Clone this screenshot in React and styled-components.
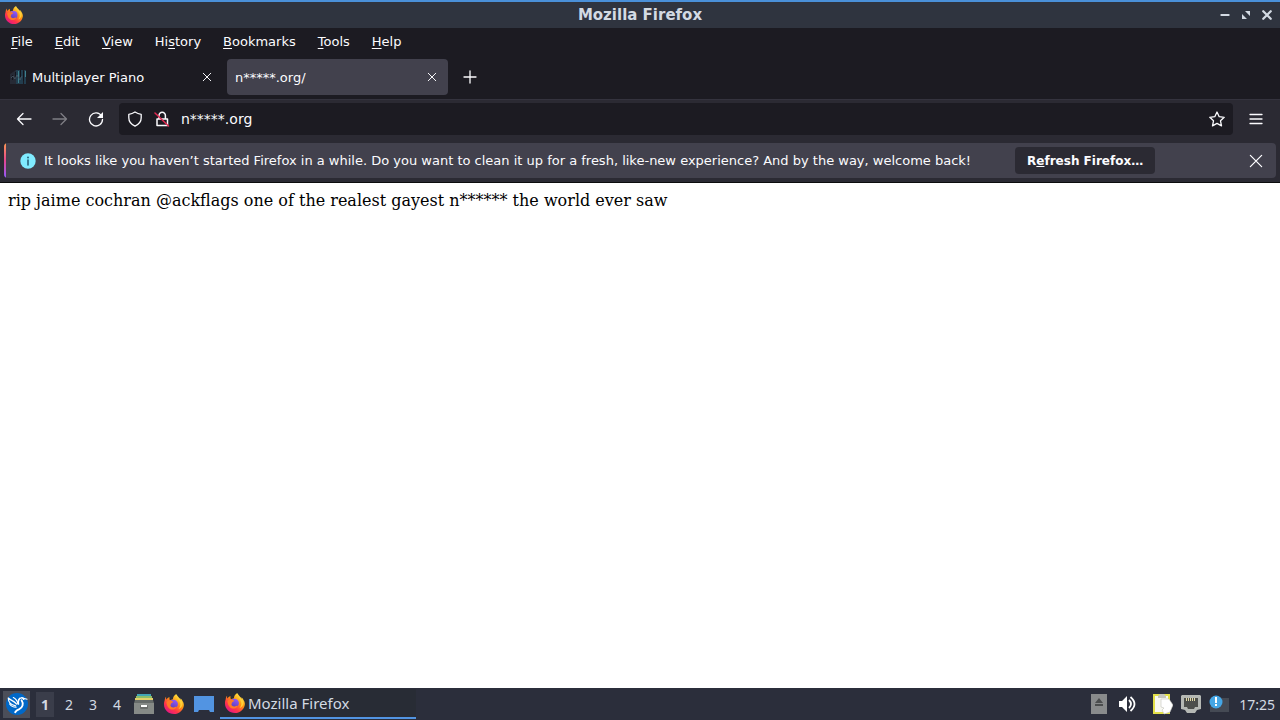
import React from 'react'
import styled, { createGlobalStyle } from 'styled-components'

const GlobalStyle = createGlobalStyle`
  * {
    box-sizing: border-box;
  }

  body {
    margin: 0;
    font-family: 'DejaVu Sans', sans-serif;
    font-size: 13px;
    color: #fbfbfe;
  }

  button,
  input {
    font: inherit;
    color: inherit;
    border: 0;
    padding: 0;
    background: none;
  }

  svg {
    display: block;
    flex: none;
  }
`

const Desktop = styled.div`
  display: flex;
  flex-direction: column;
  min-height: 100vh;
  background: #1c1b22;
`

const TitleBar = styled.header`
  display: grid;
  grid-template-columns: 1fr auto 1fr;
  align-items: center;
  height: 28px;
  padding: 0 5px;
  border-top: 2px solid #4a90d9;
  background: #2f343f;
`

const WindowTitle = styled.h1`
  margin: 0;
  font-size: 15px;
  line-height: 16px;
  color: #d3dae3;
`

const WindowButtons = styled.div`
  display: flex;
  justify-content: flex-end;
  gap: 5px;
`

const IconButton = styled.button`
  display: flex;
  align-items: center;
  justify-content: center;
  flex: none;
  width: ${({ $size }) => $size || 16}px;
  height: ${({ $size }) => $size || 16}px;
  opacity: ${({ disabled }) => (disabled ? 0.4 : 1)};
`

const MenuBar = styled.nav`
  display: flex;
  height: 27px;
`

const MenuItem = styled.button`
  padding: 0 11px;

  u {
    text-underline-offset: 2px;
  }
`

const TabStrip = styled.div`
  display: flex;
  align-items: center;
  gap: 4px;
  height: 44px;
  padding-left: 2px;
`

const Tab = styled.div`
  display: flex;
  align-items: center;
  gap: 6px;
  width: 221px;
  height: 36px;
  padding: 0 8px;
  border-radius: 4px;
  background: ${({ $active }) => ($active ? '#42414d' : 'transparent')};
`

const TabLabel = styled.button`
  flex: 1;
  text-align: left;
  white-space: nowrap;
  overflow: hidden;
`

const NavBar = styled.div`
  display: flex;
  align-items: center;
  gap: 4px;
  height: 41px;
  padding: 0 8px 2px;
  border-top: 1px solid #34333e;
  background: #2b2a33;
`

const AddressBar = styled.label`
  display: flex;
  align-items: center;
  gap: 11px;
  flex: 1;
  height: 32px;
  margin: 0 3px;
  padding: 0 8px;
  border-radius: 4px;
  background: #1c1b22;
`

const AddressInput = styled.input`
  flex: 1;
  min-width: 0;
  font-size: 14px;
  outline: none;
`

const NoticeArea = styled.div`
  padding: 3px 4px 4px;
  border-bottom: 1px solid #0c0c0d;
  background: #2b2a33;
`

const Notice = styled.div`
  display: flex;
  align-items: center;
  height: 35px;
  padding-right: 12px;
  border-radius: 4px;
  overflow: hidden;
  background: #42414d;

  &::before {
    content: '';
    width: 2px;
    height: 100%;
    margin-right: 14px;
    background: linear-gradient(#ff9a50, #e5468f 50%, #9059ff);
  }
`

const NoticeText = styled.p`
  margin: 0 44px 0 8px;
  white-space: nowrap;
`

const RefreshButton = styled.button`
  height: 27px;
  margin-right: auto;
  padding: 0 12px;
  border-radius: 4px;
  font-size: 12px;
  font-weight: bold;
  white-space: nowrap;
  background: #2b2a33;
`

const Page = styled.main`
  flex: 1;
  padding: 8px;
  background: #fff;
  color: #000;
  font-family: 'DejaVu Serif', serif;
  font-size: 16px;
  line-height: 19px;
`

const Taskbar = styled.footer`
  display: flex;
  align-items: center;
  height: 32px;
  padding: 0 5px 0 3px;
  background: #2b2e3b;
  color: #d3dae3;
  font-family: 'Noto Sans', sans-serif;
  font-size: 14px;
`

const StartButton = styled.button`
  display: flex;
  align-items: center;
  justify-content: center;
  width: 27px;
  height: 27px;
  background: #4b4e59;
`

const Workspaces = styled.div`
  display: flex;
  gap: 6px;
  margin: 0 6px;
`

const Workspace = styled.button`
  width: 18px;
  height: 25px;
  font-weight: ${({ $active }) => ($active ? 'bold' : 'normal')};
  background: ${({ $active }) => ($active ? '#3a3d4a' : 'transparent')};
`

const Launchers = styled.div`
  display: flex;
  gap: 6px;
`

const Task = styled.button`
  display: flex;
  align-items: center;
  gap: 3px;
  width: 196px;
  height: 30px;
  margin: 0 auto 0 4px;
  padding: 0 5px;
  border-bottom: 2px solid #5294e2;
  background: #282c35;
  font-size: 15px;
`

const Tray = styled.div`
  display: flex;
  align-items: center;
  gap: 8px;
`

const TrayGroup = styled.div`
  display: flex;
  gap: 4px;

  & + & {
    margin-left: 4px;
  }
`

const Clock = styled.time`
  white-space: nowrap;
`

const Line = ({ size = 16, d, width = 1.3, color = '#fbfbfe', children }) => (
  <svg width={size} height={size} viewBox="0 0 16 16" fill="none" stroke={color}
    strokeWidth={width} strokeLinecap="round" strokeLinejoin="round">
    <path d={d} />
    {children}
  </svg>
)

const FirefoxLogo = ({ size = 18, id }) => (
  <svg width={size} height={size} viewBox="0 0 24 24">
    <defs>
      <linearGradient id={`${id}-flame`} x1="0.85" y1="0.05" x2="0.2" y2="0.95">
        <stop offset="0" stopColor="#fff44f" />
        <stop offset="0.4" stopColor="#ff980e" />
        <stop offset="0.72" stopColor="#ff3647" />
        <stop offset="1" stopColor="#e31587" />
      </linearGradient>
      <linearGradient id={`${id}-globe`} x1="0.7" y1="0" x2="0.3" y2="1">
        <stop offset="0" stopColor="#9059ff" />
        <stop offset="1" stopColor="#6140b5" />
      </linearGradient>
    </defs>
    <path fill={`url(#${id}-flame)`} d="M22.2 8.4c-.6-1.500-1.800-2.800-2.800-3.300.6 1.100.9 2 1 2.800-1.400-3.200-3.800-4.500-5.400-7.300-.2-.3-.3-.5-.3-.6-3 1.700-4 4.600-4 6.200-1.500.1-2.700.7-3.600 1.300C6.500 6.300 6.400 4.800 6.600 3.600 5 4.300 3.700 5.500 2.900 6.600c-.5-.7-.4-2.800-.4-3.200C1.300 4.600.9 6.700.7 8.200 0 10 0 11.500 0 12.600 0 19 5.300 24 12 24c5.900 0 10.700-4.100 11.700-9.700.4-2.100-.2-4.100-1.500-5.900z" />
    <circle cx="11.500" cy="12" r="5.200" fill={`url(#${id}-globe)`} />
    <path fill="#ff7a26" d="M3 9.600c1.300-1.400 3.200-1.700 4.700-1.100 1.500-.4 2.600-.1 3.500.6-.1 1-1.800 1.500-2.700 2.200-.5.400-.2 1.800-.9 2.300.6 2.200 2.500 3 4.300 2.500 1.300-.4 2.100-1.100 3.300-.6-1 2-3 3.300-5.200 3.200C6 18.600 3.100 14.600 3 9.600z" />
    <path fill="#ffd039" d="M15 2c.4 3.700 4.700 5.600 4.700 10.600 0 2.300-.9 4.100-2.200 5.300 4-1.200 5.500-5.600 3.800-9.300C19.800 5.700 16.600 5 15 2z" />
  </svg>
)

const CloseIcon = ({ size, width = 1.3 }) => (
  <Line size={size} width={width} d="M3 3l10 10M13 3L3 13" />
)

const PianoIcon = () => (
  <svg width="16" height="16" viewBox="0 0 16 16">
    <path fill="#262a35" d="M0 5l6-4v14H0z" />
    <path fill="#223d4e" d="M6 1h7v14H6zM14 1h2v14h-2z" />
    <path fill="#14141c" d="M2 6h1v5H2zM5 3h1v7H5zM10 1h1v7h-1zM13 2h1v10h-1z" />
    <path stroke="#3d7f8c" d="M8.500 2v12M15.500 2v6" />
    <path stroke="#4a5a68" strokeWidth=".8" fill="none" d="M1 9l2-2 2 3 2-4 3 5 2-4" />
  </svg>
)

const ShieldIcon = () => (
  <Line d="M8 1c2 1.300 4 2 6.200 2.300v3.500c0 3.700-2.300 6.600-6.200 8.300-3.900-1.700-6.200-4.600-6.200-8.300V3.300C4 3 6 2.300 8 1z" />
)

const LockIcon = () => (
  <Line d="M3 8h10.500v6.500H3zM5 8V4.500a3.200 3.200 0 0 1 6.400 0V8" width={1.5}>
    <path stroke="#e22850" strokeWidth="1.500" d="M1 2l13.500 13" />
  </Line>
)

const InfoIcon = () => (
  <svg width="16" height="16" viewBox="0 0 16 16">
    <circle cx="8" cy="8" r="7.700" fill="#80ebff" />
    <circle cx="8" cy="4.500" r="1" fill="#27637a" />
    <path d="M8 7v5" stroke="#27637a" strokeWidth="1.600" strokeLinecap="round" />
  </svg>
)

const BirdIcon = () => (
  <svg width="22" height="22" viewBox="0 0 24 24">
    <circle cx="12" cy="12" r="12" fill="#0068c8" />
    <g fill="none" stroke="#fff" strokeLinecap="round" strokeLinejoin="round">
      <path strokeWidth="1.300" d="M2.500 5.500c2.500 2.500 6 3 9 6.500M2.500 5.500c0 4 2.500 7.500 8 8.500M8 5c3 1.500 4.500 4 5 7" />
      <path strokeWidth="1.300" d="M4 12c1.500 2.500 4 3.500 7 3.500" />
      <path strokeWidth="1.800" d="M13.500 12c-.6-4 .8-6.500 3.200-6.800 1.300-.2 2.300.6 2.600 1.500" />
      <path strokeWidth="1.200" d="M18 5.500l5 1.300" />
      <path strokeWidth="2" d="M17 8c2.600 4 1 8-2.500 9.500-2 .8-3.500 1.500-4.500 3.500" />
    </g>
  </svg>
)

const FilesIcon = () => (
  <svg width="22" height="22" viewBox="0 0 22 22">
    <path fill="#42a5b5" d="M4 1h14v3H4z" />
    <path fill="#8bbd6a" d="M3 3h16v3H3z" />
    <path fill="#e3cf6a" d="M2 5h18v3H2z" />
    <path fill="#666b69" d="M2 7h18l1 3v11H1V10z" />
    <path fill="#868a87" d="M1 10h20v11H1z" />
    <rect x="7" y="12" width="8" height="4" rx="1" fill="#6b6e6c" />
    <path fill="#fff" d="M8 12h6v2H8z" />
  </svg>
)

const DesktopIcon = () => (
  <svg width="24" height="22" viewBox="0 0 24 22">
    <path fill="#5294e2" d="M2 3h20v16h-4l-1-2H7l-1 2H2z" />
  </svg>
)

const EjectIcon = () => (
  <svg width="16" height="20" viewBox="0 0 16 20">
    <path fill="#898b8c" d="M0 0h16v20H0z" />
    <path fill="#4b4d4e" d="M8 4l4 5H4zM4 10h8v2H4z" />
  </svg>
)

const VolumeIcon = () => (
  <svg width="18" height="18" viewBox="0 0 18 18" fill="none" stroke="#fff" strokeWidth="1.800">
    <path fill="#fff" stroke="none" d="M1 6h3l5-5v16l-5-5H1z" />
    <path d="M11 5q4 4 0 8M12.500 2q8 7 0 14" />
  </svg>
)

const ClipboardIcon = () => (
  <svg width="20" height="22" viewBox="0 0 20 22">
    <path fill="#e3e04a" d="M0 1h17v20H0z" />
    <path fill="#f8f8f2" d="M2 3h13v16H2z" />
    <path fill="#c6c6bd" d="M5 3l2-2h4l2 2v2H5z" />
    <path fill="#fff" stroke="#c4c4bc" strokeWidth=".6" d="M8 6h8l4 6-3 7-6 2-2-4 2-2-3-1z" />
  </svg>
)

const NetworkIcon = () => (
  <svg width="20" height="18" viewBox="0 0 20 18">
    <path fill="#b5b8b4" d="M1 0h18l1 1v13l-4 1-2 3H6l-2-3-4-1V1z" />
    <path fill="#4d4f4c" d="M3 3h14v9h-3l-1 2H7l-1-2H3z" />
    <path stroke="#e2d9a8" strokeWidth="1" d="M5.500 3v3M7.500 3v3M9.500 3v3M11.500 3v3M13.500 3v3" />
  </svg>
)

const UpdateIcon = () => (
  <svg width="20" height="20" viewBox="0 0 20 20">
    <path fill="#454a54" d="M5 4h15v14H1v-5z" />
    <circle cx="7" cy="8" r="6.500" fill="#45a6e5" />
    <path fill="#fff" d="M6 3h2v6H6zM6 10h2v2H6z" />
  </svg>
)

const MENU = [
  ['', 'F', 'ile'],
  ['', 'E', 'dit'],
  ['', 'V', 'iew'],
  ['Hi', 's', 'tory'],
  ['', 'B', 'ookmarks'],
  ['', 'T', 'ools'],
  ['', 'H', 'elp']
]

export default function App() {
  return (
    <Desktop>
      <GlobalStyle />
      <TitleBar>
        <FirefoxLogo id="title" />
        <WindowTitle>Mozilla Firefox</WindowTitle>
        <WindowButtons>
          <IconButton aria-label="Minimize">
            <Line size={12} d="M3 8h10" width={2.5} color="#d3dae3" />
          </IconButton>
          <IconButton aria-label="Maximize">
            <svg width="10" height="10" viewBox="0 0 10 10" fill="#d3dae3">
              <path d="M4 1h5v5zM1 4v5h5z" />
            </svg>
          </IconButton>
          <IconButton aria-label="Close">
            <Line size={12} d="M3 3l10 10M13 3L3 13" width={3} color="#d3dae3" />
          </IconButton>
        </WindowButtons>
      </TitleBar>

      <MenuBar>
        {MENU.map(([before, key, after]) => (
          <MenuItem key={after}>{before}<u>{key}</u>{after}</MenuItem>
        ))}
      </MenuBar>

      <TabStrip>
        <Tab>
          <PianoIcon />
          <TabLabel>Multiplayer Piano</TabLabel>
          <IconButton aria-label="Close tab"><CloseIcon size={12} /></IconButton>
        </Tab>
        <Tab $active>
          <TabLabel>n*****.org/</TabLabel>
          <IconButton aria-label="Close tab"><CloseIcon size={12} /></IconButton>
        </Tab>
        <IconButton $size={36} aria-label="New tab">
          <Line d="M8 2v12M2 8h12" />
        </IconButton>
      </TabStrip>

      <NavBar>
        <IconButton $size={32} aria-label="Back">
          <Line d="M15 8H1.500M7 2.500L1.500 8 7 13.500" />
        </IconButton>
        <IconButton $size={32} aria-label="Forward" disabled>
          <Line d="M1 8h13.500M9 2.500L14.500 8 9 13.500" />
        </IconButton>
        <IconButton $size={32} aria-label="Reload">
          <Line d="M13.500 5A6.500 6.500 0 1 0 14.500 8.500">
            <path fill="#fbfbfe" stroke="none" d="M15 1v6H9z" />
          </Line>
        </IconButton>
        <AddressBar>
          <ShieldIcon />
          <LockIcon />
          <AddressInput aria-label="Address" defaultValue="n*****.org" />
          <IconButton aria-label="Bookmark this page">
            <Line d="M8 1l2.200 4.700 5 .6-3.700 3.500 1 5.100L8 12.400l-4.500 2.500 1-5.100L.8 6.300l5-.6z" />
          </IconButton>
        </AddressBar>
        <IconButton $size={32} aria-label="Open menu">
          <Line d="M2 3.500h12M2 8h12M2 12.500h12" />
        </IconButton>
      </NavBar>

      <NoticeArea>
        <Notice>
          <InfoIcon />
          <NoticeText>
            It looks like you haven’t started Firefox in a while. Do you want to clean it up for a fresh, like-new experience? And by the way, welcome back!
          </NoticeText>
          <RefreshButton>R<u>e</u>fresh Firefox…</RefreshButton>
          <IconButton aria-label="Dismiss"><CloseIcon size={18} width={1.1} /></IconButton>
        </Notice>
      </NoticeArea>

      <Page>rip jaime cochran @ackflags one of the realest gayest n****** the world ever saw</Page>

      <Taskbar>
        <StartButton aria-label="Applications"><BirdIcon /></StartButton>
        <Workspaces>
          {[1, 2, 3, 4].map(n => (
            <Workspace key={n} $active={n === 1}>{n}</Workspace>
          ))}
        </Workspaces>
        <Launchers>
          <IconButton $size={24} aria-label="Files"><FilesIcon /></IconButton>
          <IconButton $size={24} aria-label="Firefox"><FirefoxLogo size={20} id="launcher" /></IconButton>
          <IconButton $size={24} aria-label="Show desktop"><DesktopIcon /></IconButton>
        </Launchers>
        <Task>
          <FirefoxLogo size={20} id="task" />
          Mozilla Firefox
        </Task>
        <Tray>
          <TrayGroup>
            <IconButton $size={24} aria-label="Removable media"><EjectIcon /></IconButton>
            <IconButton $size={24} aria-label="Volume"><VolumeIcon /></IconButton>
          </TrayGroup>
          <TrayGroup>
            <IconButton $size={24} aria-label="Clipboard"><ClipboardIcon /></IconButton>
            <IconButton $size={24} aria-label="Network"><NetworkIcon /></IconButton>
            <IconButton $size={24} aria-label="Updates"><UpdateIcon /></IconButton>
          </TrayGroup>
          <Clock>17:25</Clock>
        </Tray>
      </Taskbar>
    </Desktop>
  )
}
